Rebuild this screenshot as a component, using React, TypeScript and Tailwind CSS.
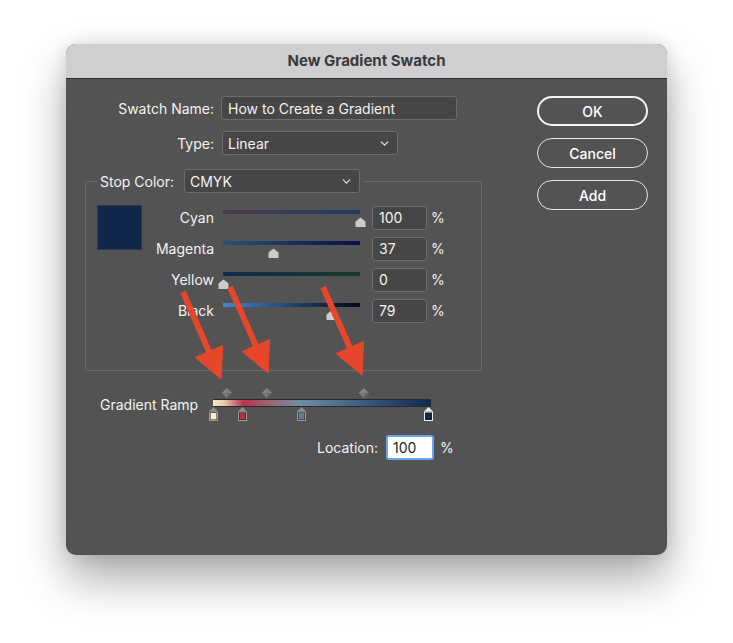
import { ChevronDown } from "lucide-react";

// ================= Data =================
type Channel = {
  name: string;
  value: number;
  track: string;
};

const CHANNELS: Channel[] = [
  { name: "Cyan", value: 100, track: "bg-linear-to-r from-[#4d3b4e] to-[#1c3b62]" },
  { name: "Magenta", value: 37, track: "bg-linear-to-r from-[#2c5374] to-[#0a0c4c]" },
  { name: "Yellow", value: 0, track: "bg-linear-to-r from-[#0f2b4b] to-[#1a3a2a]" },
  { name: "Black", value: 79, track: "bg-linear-to-r from-[#3f88d2] to-[#060b16]" },
];

const STOPS = [
  { at: 0, color: "#f7edcb", selected: false },
  { at: 29, color: "#b3303f", selected: false },
  { at: 88, color: "#5f7e97", selected: false },
  { at: 215, color: "#10294a", selected: true },
];

const MIDPOINTS = [14, 54, 151];

// arrows in page coords: start -> tip
const ARROWS = [
  { x1: 183, y1: 292, x2: 221, y2: 379 },
  { x1: 230, y1: 287, x2: 268, y2: 373 },
  { x1: 323, y1: 287, x2: 362, y2: 375 },
];

function arrowShape(a: { x1: number; y1: number; x2: number; y2: number }) {
  const dx = a.x2 - a.x1;
  const dy = a.y2 - a.y1;
  const len = Math.hypot(dx, dy);
  const ux = dx / len;
  const uy = dy / len;
  const head = 30;
  const half = 15;
  const bx = a.x2 - ux * head;
  const by = a.y2 - uy * head;
  const px = -uy;
  const py = ux;
  return {
    line: { x1: a.x1, y1: a.y1, x2: bx + ux * 2, y2: by + uy * 2 },
    head: `${a.x2},${a.y2} ${bx + px * half},${by + py * half} ${bx - px * half},${by - py * half}`,
  };
}

// ================= Parts =================
function Field({ value, className = "" }: { value: string; className?: string }) {
  return (
    <div
      className={`flex h-[24px] items-center rounded-[3px] border border-[#6c6c6c] bg-[#464646] px-[6px] text-[14px] text-[#f2f2f2] ${className}`}
    >
      {value}
    </div>
  );
}

function Select({ value, className = "" }: { value: string; className?: string }) {
  return (
    <div
      className={`flex h-[24px] items-center justify-between rounded-[3px] border border-[#6c6c6c] bg-[#464646] pl-[5px] pr-[6px] text-[14px] text-[#f2f2f2] ${className}`}
    >
      <span>{value}</span>
      <ChevronDown size={13} strokeWidth={2} className="text-[#e6e6e6]" />
    </div>
  );
}

function Thumb({ left }: { left: number }) {
  return (
    <svg
      width="11"
      height="10"
      viewBox="0 0 11 10"
      className="absolute top-[15px]"
      style={{ left: left - 5.5 }}
    >
      <path d="M5.5 0.5 L10.5 4.5 L10.5 9.5 Q10.5 10 10 10 L1 10 Q0.5 10 0.5 9.5 L0.5 4.5 Z" fill="#cbcbcb" />
    </svg>
  );
}

function StopMarker({ color, selected }: { color: string; selected: boolean }) {
  return (
    <svg width="11" height="15" viewBox="0 0 11 15">
      <path d="M5.5 0 L10 4.5 L1 4.5 Z" fill={selected ? "#ececec" : "#8e8e8e"} />
      <rect x="1" y="4.5" width="9" height="9.5" fill={selected ? "#f0f0f0" : "#9a9a9a"} />
      <rect x="2" y="5.5" width="7" height="7.5" fill="#1f1f1f" />
      <rect x="2.5" y="6" width="6" height="6.5" fill={color} />
    </svg>
  );
}

function Diamond() {
  return (
    <svg width="10" height="10" viewBox="0 0 10 10">
      <path d="M5 0 L10 5 L5 10 L0 5 Z" fill="#6a6a6a" />
      <path d="M5 0 L0 5 L5 10 Z" fill="#7c7c7c" />
      <path d="M5 0 L10 5 L0 5 Z" fill="#8a8a8a" opacity="0.6" />
    </svg>
  );
}

// ================= Page =================
export default function App() {
  return (
    <div className="relative h-[643px] w-[733px] overflow-hidden bg-white pl-[66px] pt-[44px] font-['Inter','Liberation_Sans',sans-serif]">
      <div className="h-[511px] w-[601px] overflow-hidden rounded-[10px] bg-[#535353] shadow-[0_24px_45px_rgba(0,0,0,0.33),0_0_18px_rgba(0,0,0,0.12)]">
        {/* Title bar */}
        <div className="flex h-[35px] items-center justify-center border-b border-[#2b2b2b] bg-[#cfcfd2] text-[15px] font-bold text-[#3a3a3a]">
          New Gradient Swatch
        </div>

        <div className="flex text-[14px] text-[#f2f2f2]">
          {/* Left column */}
          <div className="w-[471px] pt-[17px]">
            <div className="flex items-center">
              <div className="w-[148px] text-right">Swatch Name:</div>
              <Field value="How to Create a Gradient" className="ml-[7px] w-[236px]" />
            </div>

            <div className="mt-[11px] flex items-center">
              <div className="w-[148px] text-right">Type:</div>
              <Select value="Linear" className="ml-[8px] w-[176px]" />
            </div>

            {/* Stop Color group */}
            <div className="relative ml-[19px] mt-[26px] w-[397px] rounded-[4px] border border-[#6a6a6a] pb-[44px] pl-[11px] pt-[20px]">
              <div className="absolute -top-[13px] left-[11px] flex items-center bg-[#535353] px-[3px]">
                <div className="w-[84px]">Stop Color:</div>
                <Select value="CMYK" className="w-[176px]" />
              </div>

              <div className="flex">
                <div className="mt-[3px] h-[45px] w-[45px] border border-[#2e3a48] bg-[#10294a]" />
                <div className="flex flex-col">
                  {CHANNELS.map((c) => (
                    <div key={c.name} className="flex h-[31px] items-center">
                      <div className="w-[72px] text-right">{c.name}</div>
                      <div className="relative ml-[9px] h-[31px] w-[137px]">
                        <div className={`absolute left-0 right-0 top-[8px] h-[4px] ${c.track}`} />
                        <Thumb left={(c.value / 100) * 137} />
                      </div>
                      <Field value={String(c.value)} className="ml-[12px] w-[55px]" />
                      <span className="ml-[4px]">%</span>
                    </div>
                  ))}
                </div>
              </div>
            </div>

            {/* Gradient ramp */}
            <div className="ml-[34px] mt-[17px] flex items-start">
              <div className="mt-[8px] w-[113px] leading-[17px]">Gradient Ramp</div>
              <div className="relative h-[35px] w-[218px]">
                {MIDPOINTS.map((m) => (
                  <div key={m} className="absolute top-0" style={{ left: m - 5 }}>
                    <Diamond />
                  </div>
                ))}
                <div className="absolute left-0 right-0 top-[11px] h-[8px] border-y border-[#2a2a2a] bg-[linear-gradient(to_right,#f6e8cb_0%,#ecc9ad_5%,#b7344a_14%,#a0606f_24%,#6e8da4_40%,#3a5e80_68%,#10294a_100%)]" />
                {STOPS.map((s) => (
                  <div key={s.at} className="absolute top-[19px]" style={{ left: s.at - 5.5 }}>
                    <StopMarker color={s.color} selected={s.selected} />
                  </div>
                ))}
              </div>
            </div>

            {/* Location */}
            <div className="mt-[12px] flex items-center">
              <div className="w-[312px] text-right">Location:</div>
              <div className="ml-[8px] flex h-[25px] w-[48px] items-center rounded-[3px] border-2 border-[#6aa4ec] bg-white px-[5px] text-[#1e1e1e]">
                100
              </div>
              <span className="ml-[6px]">%</span>
            </div>
          </div>

          {/* Buttons */}
          <div className="flex w-[111px] flex-col gap-[12px] pt-[17px]">
            <button className="h-[30px] rounded-full border-2 border-[#f4f4f4] text-[14px] font-medium text-white">
              OK
            </button>
            <button className="h-[30px] rounded-full border border-[#e6e6e6] text-[14px] font-medium text-white">
              Cancel
            </button>
            <button className="h-[30px] rounded-full border border-[#e6e6e6] text-[14px] font-medium text-white">
              Add
            </button>
          </div>
        </div>
      </div>

      {/* Annotation arrows */}
      <svg
        width="733"
        height="643"
        viewBox="0 0 733 643"
        className="pointer-events-none absolute left-0 top-0"
      >
        {ARROWS.map((a, i) => {
          const s = arrowShape(a);
          return (
            <g key={i} fill="#e6472a" stroke="#e6472a">
              <line {...s.line} strokeWidth="6" />
              <polygon points={s.head} strokeWidth="1" strokeLinejoin="round" />
            </g>
          );
        })}
      </svg>
    </div>
  );
}
